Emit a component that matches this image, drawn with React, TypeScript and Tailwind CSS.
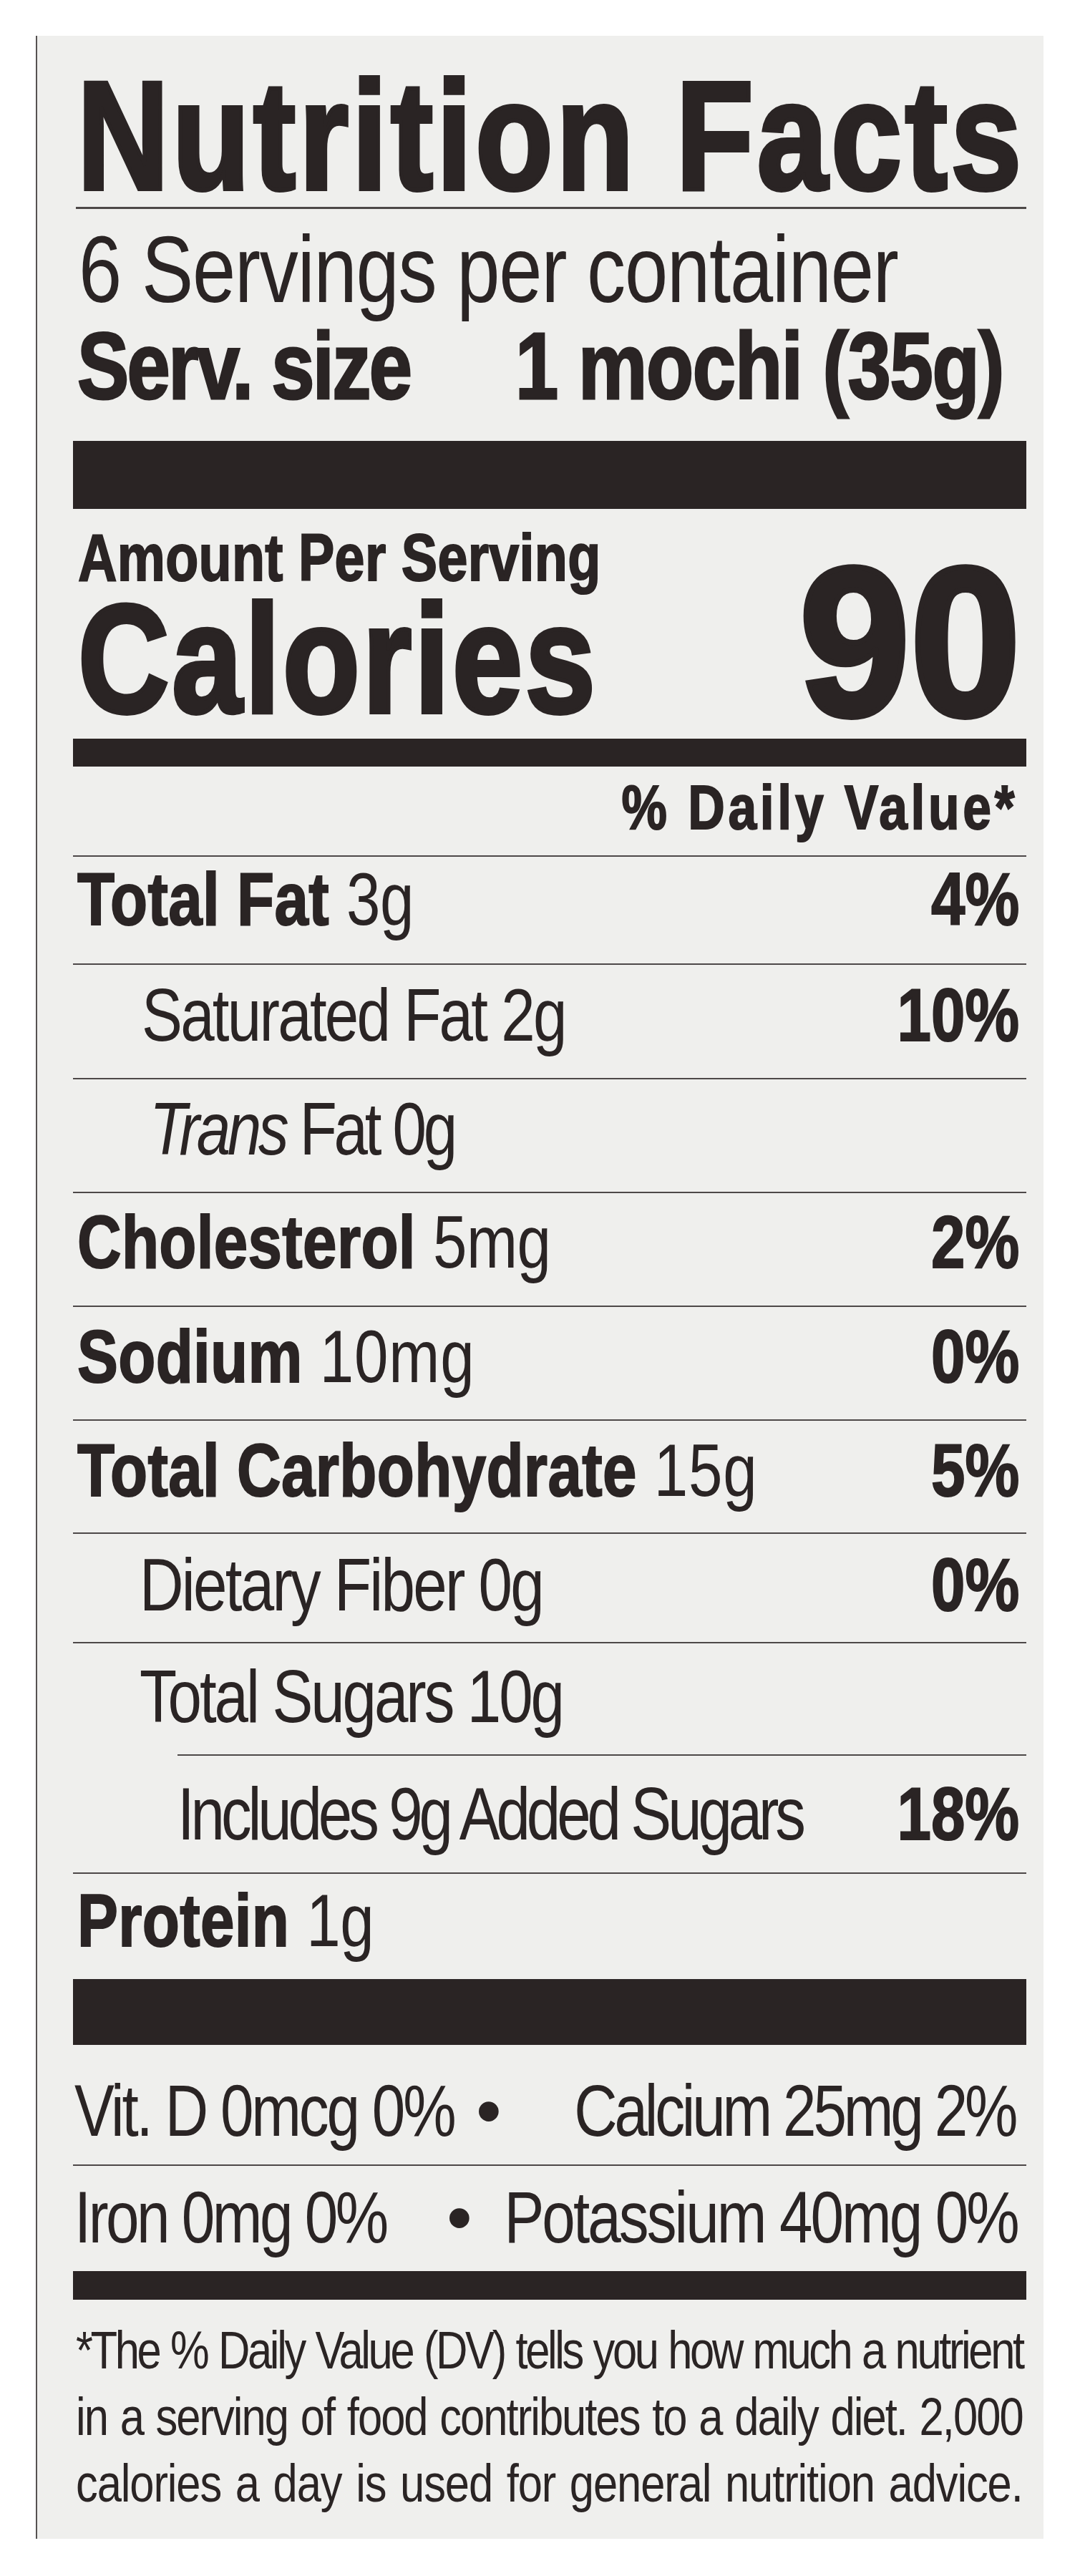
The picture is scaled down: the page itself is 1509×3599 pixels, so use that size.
import type { ReactNode } from "react";

const FONT = "font-['Liberation_Sans','Arial',sans-serif]";

// No condensed face is installed, so condensed type is drawn by narrowing each text run.
function Cond({
  children,
  className = "",
  right = false,
  scale = "scale-x-[0.82]",
}: {
  children: ReactNode;
  className?: string;
  right?: boolean;
  scale?: string;
}) {
  return (
    <span
      className={`inline-block whitespace-nowrap ${scale} ${right ? "origin-right" : "origin-left"} ${className}`}
    >
      {children}
    </span>
  );
}

type NutrientRow = {
  label?: string;
  italic?: string;
  amount: string;
  pct?: string;
  box: string;
  indent: string;
  track: string;
};

const rows: NutrientRow[] = [
  { label: "Total Fat", amount: "3g", pct: "4%", box: "h-[151px] pt-[7px]", indent: "pl-[6px]", track: "tracking-[-0.005em]" },
  { amount: "Saturated Fat 2g", pct: "10%", box: "h-[160px] pt-[18px]", indent: "pl-[96px]", track: "tracking-[-0.032em]" },
  { italic: "Trans", amount: " Fat 0g", box: "h-[159px] pt-[17px]", indent: "pl-[107px]", track: "tracking-[-0.05em]" },
  { label: "Cholesterol", amount: "5mg", pct: "2%", box: "h-[159px] pt-[16px]", indent: "pl-[6px]", track: "tracking-[-0.005em]" },
  { label: "Sodium", amount: "10mg", pct: "0%", box: "h-[159px] pt-[17px]", indent: "pl-[6px]", track: "tracking-[0.01em]" },
  { label: "Total Carbohydrate", amount: "15g", pct: "5%", box: "h-[158px] pt-[17px]", indent: "pl-[6px]", track: "tracking-[0.01em]" },
  { amount: "Dietary Fiber 0g", pct: "0%", box: "h-[153px] pt-[19px]", indent: "pl-[93px]", track: "tracking-[-0.032em]" },
  { amount: "Total Sugars 10g", box: "h-[157px] pt-[22px]", indent: "pl-[93px]", track: "tracking-[-0.036em]" },
  { amount: "Includes 9g Added Sugars", pct: "18%", box: "h-[165px] pt-[29px] ml-[146px]", indent: "pl-0", track: "tracking-[-0.06em]" },
  { label: "Protein", amount: "1g", box: "h-[149px] pt-[13px]", indent: "pl-[6px]", track: "tracking-[-0.005em]" },
];

function Row({ row }: { row: NutrientRow }) {
  return (
    <div className={`flex items-start border-t-2 border-[#4d4848] pr-[10px] ${row.box} ${row.indent}`}>
      <div className="min-w-0 flex-1 text-[104px] leading-[104px]">
        <Cond>
          {row.label ? (
            <span className="font-bold tracking-[0.004em] [-webkit-text-stroke:2px_#2a2424]">
              {row.label}{" "}
            </span>
          ) : null}
          {row.italic ? <span className={`italic ${row.track}`}>{row.italic}</span> : null}
          <span className={row.track}>{row.amount}</span>
        </Cond>
      </div>
      {row.pct ? (
        <div className="shrink-0 text-[104px] leading-[104px] font-bold [-webkit-text-stroke:2px_#2a2424]">
          <Cond right>{row.pct}</Cond>
        </div>
      ) : null}
    </div>
  );
}

export default function App() {
  return (
    <div className={`min-h-[3599px] overflow-hidden bg-white pl-[50px] pt-[50px] text-[#2a2424] ${FONT}`}>
      <div className="h-[3497px] w-[1408px] border-l-2 border-[#555252] bg-[#efefed] pl-[50px] pr-[24px] pt-[40px]">
        <h1 className="pl-[6px] text-[216px] leading-[199px] font-bold tracking-[0.028em] [-webkit-text-stroke:6px_#2a2424]">
          <Cond>Nutrition Facts</Cond>
        </h1>
        <div className="ml-[4px] h-[3px] bg-[#4d4848]" />

        <p className="mt-[20px] pl-[8px] text-[132px] leading-[130px] tracking-[-0.011em]">
          <Cond>6 Servings per container</Cond>
        </p>
        <div className="flex pl-[6px] text-[132px] leading-[140px] font-bold [-webkit-text-stroke:3px_#2a2424]">
          <div className="w-[612px] shrink-0">
            <Cond className="tracking-[-0.024em]">Serv. size</Cond>
          </div>
          <Cond className="tracking-[-0.011em]">1 mochi (35g)</Cond>
        </div>

        <div className="mt-[34px] h-[95px] bg-[#2a2424]" />

        <div className="mt-[22px] flex items-end justify-between">
          <div className="pl-[7px]">
            <p className="text-[92px] leading-[92px] font-bold tracking-[0.004em] [-webkit-text-stroke:2px_#2a2424]">
              <Cond>Amount Per Serving</Cond>
            </p>
            <p className="mt-[6px] text-[215px] leading-[180px] font-bold tracking-[0.022em] [-webkit-text-stroke:6px_#2a2424]">
              <Cond>Calories</Cond>
            </p>
          </div>
          <p className="mb-[14px] pr-[8px] text-[296px] leading-[200px] font-bold [-webkit-text-stroke:8px_#2a2424]">
            <Cond right scale="scale-x-[0.94]">90</Cond>
          </p>
        </div>

        <div className="mt-[21px] h-[39px] bg-[#2a2424]" />

        <p className="mt-[13px] pr-[12px] text-right text-[87px] leading-[87px] font-bold tracking-[0.066em] [-webkit-text-stroke:2px_#2a2424]">
          <Cond right>% Daily Value*</Cond>
        </p>

        <div className="mt-[24px]">
          {rows.map((row) => (
            <Row key={row.amount} row={row} />
          ))}
        </div>

        <div className="h-[92px] bg-[#2a2424]" />

        <div className="flex h-[167px] items-start pl-[2px] pr-[16px] pt-[41px] text-[102px] leading-[102px]">
          <div className="w-[561px] shrink-0">
            <Cond className="tracking-[-0.038em]">Vit. D 0mcg 0%</Cond>
          </div>
          <span className="shrink-0">•</span>
          <div className="flex min-w-0 flex-1 justify-end">
            <Cond right className="tracking-[-0.05em]">Calcium 25mg 2%</Cond>
          </div>
        </div>
        <div className="flex h-[149px] items-start border-t-2 border-[#4d4848] pl-[2px] pr-[12px] pt-[21px] text-[102px] leading-[102px]">
          <div className="w-[520px] shrink-0">
            <Cond className="tracking-[-0.042em]">Iron 0mg 0%</Cond>
          </div>
          <span className="shrink-0">•</span>
          <div className="flex min-w-0 flex-1 justify-end">
            <Cond right className="tracking-[-0.035em]">Potassium 40mg 0%</Cond>
          </div>
        </div>

        <div className="h-[40px] bg-[#2a2424]" />

        <div className="mt-[24px] pl-[4px]">
          <div className="w-[1613px] origin-left scale-x-[0.82] text-[75px] leading-[93px]">
            <p className="text-justify tracking-[-0.055em] [text-align-last:justify]">
              *The % Daily Value (DV) tells you how much a nutrient
            </p>
            <p className="text-justify tracking-[-0.032em] [text-align-last:justify]">
              in a serving of food contributes to a daily diet. 2,000
            </p>
            <p className="text-justify tracking-[-0.018em] [text-align-last:justify]">
              calories a day is used for general nutrition advice.
            </p>
          </div>
        </div>
      </div>
    </div>
  );
}
